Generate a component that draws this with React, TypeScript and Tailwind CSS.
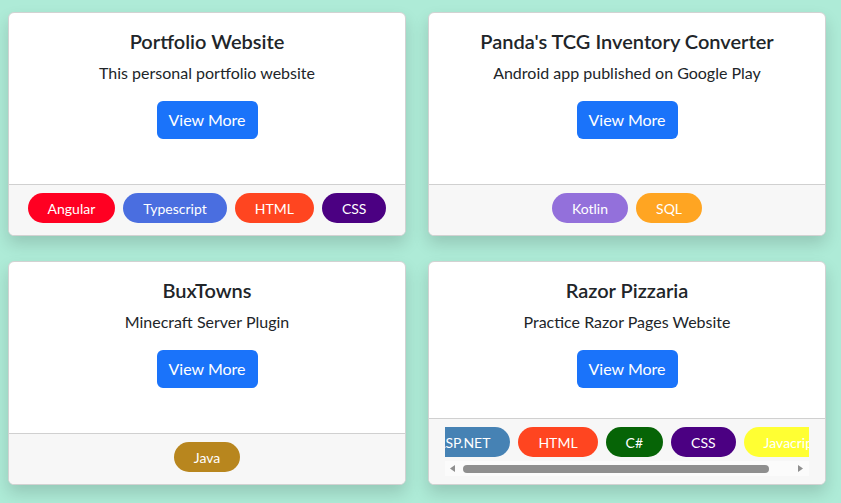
type Tag = { name: string; color: string };

type Project = {
  title: string;
  blurb: string;
  tags: Tag[];
  scrolls?: boolean;
};

const projects: Project[] = [
  {
    title: "Portfolio Website",
    blurb: "This personal portfolio website",
    tags: [
      { name: "Angular", color: "bg-[#ff0022]" },
      { name: "Typescript", color: "bg-[#4a6ee0]" },
      { name: "HTML", color: "bg-[#ff4520]" },
      { name: "CSS", color: "bg-[#4b0082]" },
    ],
  },
  {
    title: "Panda's TCG Inventory Converter",
    blurb: "Android app published on Google Play",
    tags: [
      { name: "Kotlin", color: "bg-[#9370db]" },
      { name: "SQL", color: "bg-[#ffa522]" },
    ],
  },
  {
    title: "BuxTowns",
    blurb: "Minecraft Server Plugin",
    tags: [{ name: "Java", color: "bg-[#b8861e]" }],
  },
  {
    title: "Razor Pizzaria",
    blurb: "Practice Razor Pages Website",
    scrolls: true,
    tags: [
      { name: "ASP.NET", color: "bg-[#4682b4]" },
      { name: "HTML", color: "bg-[#ff4520]" },
      { name: "C#", color: "bg-[#066406]" },
      { name: "CSS", color: "bg-[#4b0082]" },
      { name: "Javacript", color: "bg-[#ffff33]" },
    ],
  },
];

function ScrollBar() {
  return (
    <div className="flex h-[15px] items-stretch bg-[#fbfbfb]">
      <svg width="15" height="15" viewBox="0 0 15 15" className="shrink-0">
        <polygon points="10,4 10,11 5,7.5" fill="#8f8f8f" />
      </svg>
      <div className="flex flex-1 items-center px-[3px]">
        <div className="h-[8px] w-[306px] rounded-full bg-[#8f8f8f]" />
      </div>
      <svg width="15" height="15" viewBox="0 0 15 15" className="shrink-0">
        <polygon points="4,4 4,11 9,7.5" fill="#8f8f8f" />
      </svg>
    </div>
  );
}

function ProjectCard({ project }: { project: Project }) {
  return (
    <div className="flex h-[224px] flex-col overflow-hidden rounded-md border border-[#d2d2d2] bg-white shadow-[0_8px_16px_rgba(0,0,0,0.15)]">
      <div className="flex flex-1 flex-col items-center px-4 pt-4 text-center">
        <h5 className="mb-2 text-[20px] leading-[24px] font-semibold text-[#212529]">
          {project.title}
        </h5>
        <p className="mb-4 text-[16px] leading-[24px] text-[#212529]">{project.blurb}</p>
        <button className="h-[38px] rounded-md bg-[#1a73fa] px-3 text-[16px] text-white">
          View More
        </button>
      </div>
      <div className="border-t border-[#d0d0d0] bg-[#f7f7f7] px-4 py-2">
        <div className="flex justify-center gap-2 overflow-hidden pb-[4px]">
          {project.tags.map((tag) => (
            <span
              key={tag.name}
              className={`flex h-[30px] shrink-0 items-center whitespace-nowrap rounded-full px-5 text-[14px] text-white ${tag.color}`}
            >
              {tag.name}
            </span>
          ))}
        </div>
        {project.scrolls && <ScrollBar />}
      </div>
    </div>
  );
}

export default function App() {
  return (
    <div
      className="min-h-[503px] bg-[#aeebd7] pt-3 pl-2 pr-[15px] pb-4"
      style={{ fontFamily: 'Lato, "Noto Sans", sans-serif' }}
    >
      <div className="grid grid-cols-2 gap-x-[22px] gap-y-[25px]">
        {projects.map((p) => (
          <ProjectCard key={p.title} project={p} />
        ))}
      </div>
    </div>
  );
}
